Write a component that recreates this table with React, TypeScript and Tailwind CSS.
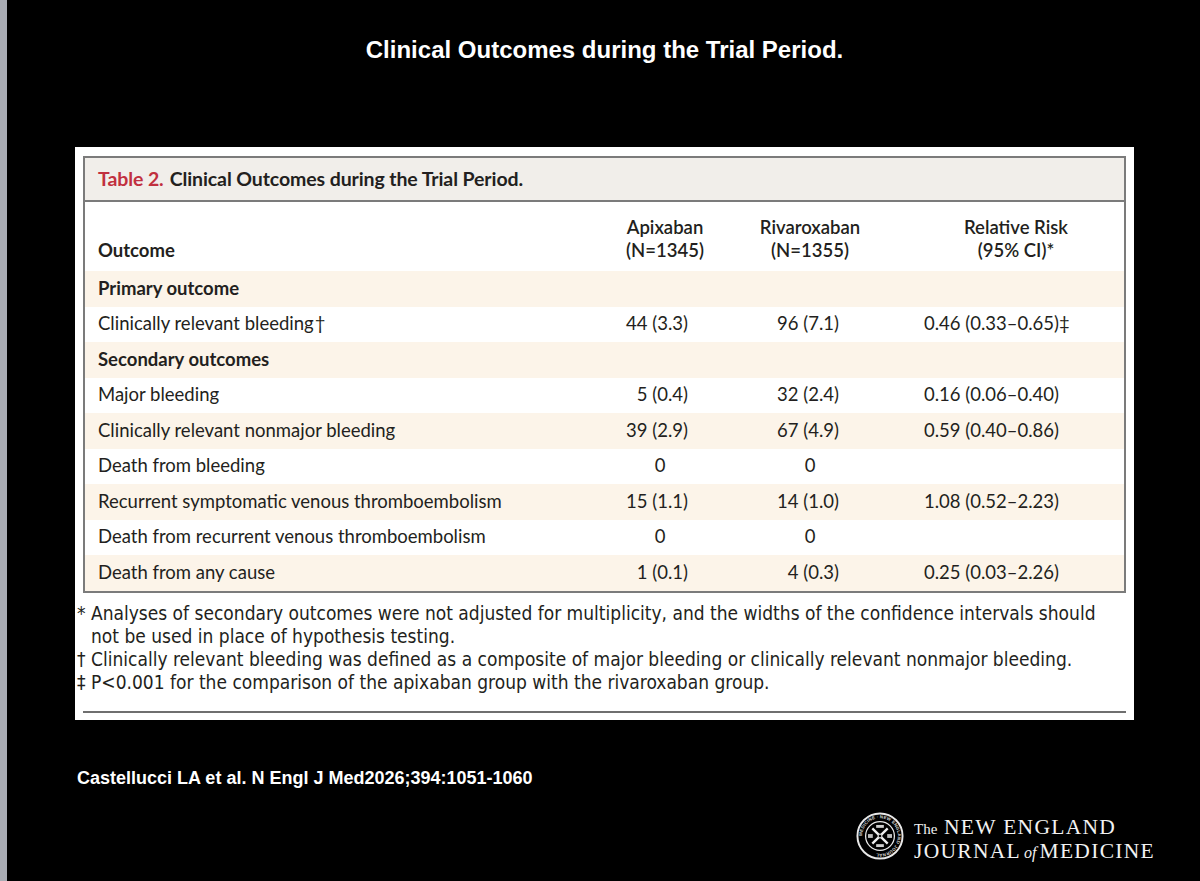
import React from "react";

type Row = {
  label: string;
  head?: boolean;
  mark?: string;
  a?: string;
  r?: string;
  rr?: string;
  rrmark?: string;
};

const rows: Row[] = [
  { label: "Primary outcome", head: true },
  { label: "Clinically relevant bleeding", mark: "†", a: "44 (3.3)", r: "96 (7.1)", rr: "0.46 (0.33–0.65)", rrmark: "‡" },
  { label: "Secondary outcomes", head: true },
  { label: "Major bleeding", a: "5 (0.4)", r: "32 (2.4)", rr: "0.16 (0.06–0.40)" },
  { label: "Clinically relevant nonmajor bleeding", a: "39 (2.9)", r: "67 (4.9)", rr: "0.59 (0.40–0.86)" },
  { label: "Death from bleeding", a: "0", r: "0" },
  { label: "Recurrent symptomatic venous thromboembolism", a: "15 (1.1)", r: "14 (1.0)", rr: "1.08 (0.52–2.23)" },
  { label: "Death from recurrent venous thromboembolism", a: "0", r: "0" },
  { label: "Death from any cause", a: "1 (0.1)", r: "4 (0.3)", rr: "0.25 (0.03–2.26)" },
];

function Seal() {
  return (
    <svg width="48" height="48" viewBox="0 0 50 50" className="shrink-0">
      <defs>
        <path id="ring" d="M25,25 m-18.5,0 a18.5,18.5 0 1,1 37,0 a18.5,18.5 0 1,1 -37,0" />
      </defs>
      <circle cx="25" cy="25" r="23.5" fill="none" stroke="#e8e8e8" strokeWidth="2" />
      <circle cx="25" cy="25" r="15" fill="none" stroke="#e8e8e8" strokeWidth="1.3" />
      <text fill="#dcdcdc" fontSize="4.6" fontFamily="Liberation Sans, sans-serif" fontWeight="700" letterSpacing="0.2">
        <textPath href="#ring">MEDICINE · NEW ENGLAND JOURNAL</textPath>
      </text>
      <line x1="17" y1="17" x2="33" y2="33" stroke="#f0f0f0" strokeWidth="2.4" />
      <line x1="33" y1="17" x2="17" y2="33" stroke="#f0f0f0" strokeWidth="2.4" />
      <rect x="21" y="13.5" width="8" height="3" fill="#d0d0d0" />
      <rect x="21" y="33.5" width="8" height="3" fill="#d0d0d0" />
      <rect x="12.5" y="23" width="5" height="4" fill="#bdbdbd" />
      <rect x="32.5" y="23" width="5" height="4" fill="#bdbdbd" />
      <circle cx="25" cy="25" r="2" fill="#000" stroke="#f0f0f0" strokeWidth="1" />
    </svg>
  );
}

export default function App() {
  const tableFont = { fontFamily: "Lato, 'Open Sans', sans-serif" };
  return (
    <div className="flex h-[881px] w-[1200px] overflow-hidden bg-black">
      <div className="h-full w-[7px] shrink-0 bg-[#a9acb4]" />
      <div className="flex flex-1 flex-col">
        <div
          className="mt-[36px] h-[28px] pl-[2px] text-center text-[24px] font-bold leading-[28px] text-white"
          style={{ fontFamily: "'Liberation Sans', Arial, sans-serif" }}
        >
          Clinical Outcomes during the Trial Period.
        </div>

        {/* Card */}
        <div className="ml-[68px] mt-[83px] flex h-[573px] w-[1059px] flex-col bg-white px-[8px] pt-[9px]" style={tableFont}>
          <div className="flex flex-col border-2 border-[#7b7b7b] text-[#231f20]">
            <div className="flex h-[44px] items-center border-b-2 border-[#7b7b7b] bg-[#f1eeea] pl-[13px] text-[19.5px] font-bold tracking-[-0.1px]">
              <span className="text-[#c1303f]">Table 2.</span>
              <span className="ml-[6px]">Clinical Outcomes during the Trial Period.</span>
            </div>
            {/* column header */}
            <div className="flex h-[69px] items-end pb-[9px] text-[18.5px] leading-[23px]">
              <div className="w-[515px] pl-[13px] font-bold">Outcome</div>
              <div className="w-[120px] pl-[10px] text-center font-semibold">
                Apixaban
                <br />
                (N=1345)
              </div>
              <div className="w-[30px]" />
              <div className="w-[120px] text-center font-semibold">
                Rivaroxaban
                <br />
                (N=1355)
              </div>
              <div className="w-[54px]" />
              <div className="w-[184px] text-center font-semibold">
                Relative Risk
                <br />
                (95% CI)*
              </div>
            </div>
            {rows.map((row, i) => (
              <div
                key={i}
                className={
                  "flex h-[35.5px] items-center text-[18.5px] " + (i % 2 === 0 ? "bg-[#fcf4e9]" : "bg-white")
                }
              >
                <div className={"w-[515px] pl-[13px] " + (row.head ? "font-bold" : "")}>
                  {row.label}
                  {row.mark ? <span className="ml-[1px]">{row.mark}</span> : null}
                </div>
                {!row.head && (
                  <>
                    <div className={"w-[120px] " + (row.a === "0" ? "text-center" : "pr-[32px] text-right")}>{row.a}</div>
                    <div className="w-[30px]" />
                    <div className={"w-[120px] " + (row.r === "0" ? "text-center" : "pr-[31px] text-right")}>{row.r}</div>
                    <div className="w-[54px]" />
                    <div className="flex-1">
                      {row.rr}
                      {row.rrmark ? <span>{row.rrmark}</span> : null}
                    </div>
                  </>
                )}
              </div>
            ))}
          </div>

          {/* footnotes */}
          <div
            className="-ml-[6px] mt-[9px] text-[19px] leading-[23px] text-[#231f20]"
            style={{ fontFamily: "'Liberation Sans Narrow', 'DejaVu Sans Condensed', Lato, sans-serif" }}
          >
            <div className="flex">
              <span className="w-[14px] shrink-0">*</span>
              <span>
                Analyses of secondary outcomes were not adjusted for multiplicity, and the widths of the confidence intervals should
                not be used in place of hypothesis testing.
              </span>
            </div>
            <div className="flex">
              <span className="w-[14px] shrink-0">†</span>
              <span>Clinically relevant bleeding was defined as a composite of major bleeding or clinically relevant nonmajor bleeding.</span>
            </div>
            <div className="flex">
              <span className="w-[14px] shrink-0">‡</span>
              <span>P&lt;0.001 for the comparison of the apixaban group with the rivaroxaban group.</span>
            </div>
          </div>
          <div className="mt-auto mb-[7px] h-[2px] bg-[#6f6f6f]" />
        </div>

        <div
          className="ml-[70px] mt-[48px] h-[20px] text-[18px] font-bold leading-[20px] text-white"
          style={{ fontFamily: "'Liberation Sans', Arial, sans-serif" }}
        >
          Castellucci LA et al. N Engl J Med2026;394:1051-1060
        </div>

        <div className="mr-[45px] mt-[20px] flex items-center justify-end gap-[10px] self-end">
          <Seal />
          <div
            className="flex flex-col pt-[8px] text-[21.5px] leading-[22px] text-[#f2f2f2]"
            style={{ fontFamily: "'Liberation Serif', 'Times New Roman', serif" }}
          >
            <div className="tracking-[1.3px]">
              <span className="text-[15px] tracking-[0px]">The</span> NEW ENGLAND
            </div>
            <div className="tracking-[1.3px]">
              JOURNAL<span className="mx-[3px] text-[16px] italic tracking-[0px]">of</span>MEDICINE
            </div>
          </div>
        </div>
      </div>
    </div>
  );
}
